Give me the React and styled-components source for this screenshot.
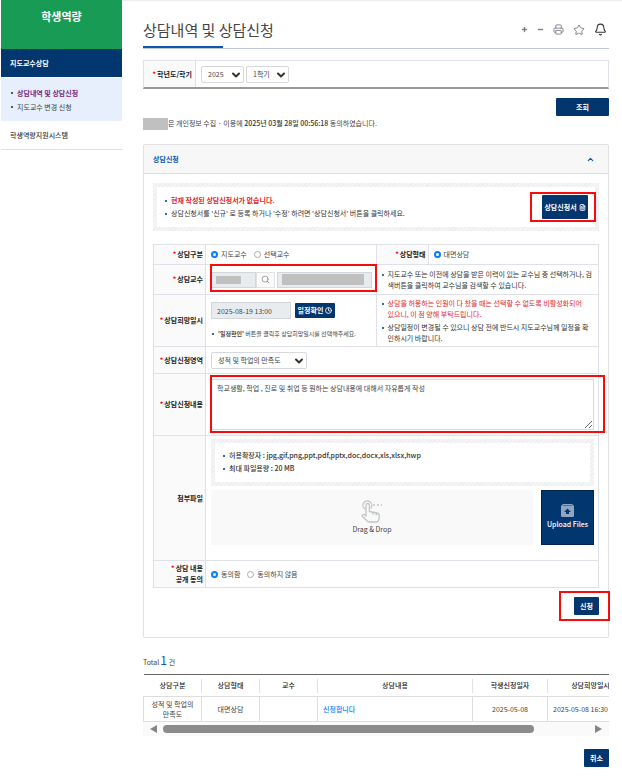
import React from "react";
import styled, { createGlobalStyle, css } from "styled-components";
import {
  Bell,
  ChevronDown,
  ChevronUp,
  Clock,
  FileText,
  Minus,
  Plus,
  Printer,
  Search,
  Star,
} from "lucide-react";

const color = {
  navy: "#02366f",
  green: "#189b54",
  blue: "#0a58b0",
  bright: "#0a7cff",
  red: "#e01f2d",
  line: "#dfe0e8",
  head: "#fafafb",
  text: "#444",
};

const GlobalStyle = createGlobalStyle`
  * {
    box-sizing: border-box;
  }

  body {
    margin: 0;
    background: #fff;
    color: ${color.text};
    font: 7px/11px "Noto Sans CJK KR", sans-serif;
  }

  button,
  input,
  select,
  textarea {
    margin: 0;
    color: inherit;
    font: inherit;
  }

  ul {
    margin: 0;
    padding: 0;
    list-style: none;
  }
`;

const Page = styled.div`
  display: flex;
  align-items: flex-start;
`;

const Sidebar = styled.nav`
  flex: none;
  width: 122px;
  padding-left: 1px;
`;

const Brand = styled.div`
  height: 49px;
  padding-top: 8px;
  background: ${color.green};
  color: #fff;
  font-size: 11px;
  font-weight: 700;
  line-height: 16px;
  text-align: center;
`;

const NavLink = styled.a`
  display: block;
  padding: 0 9px;
  line-height: 28px;
  color: #333;
  font-weight: 500;
  text-decoration: none;
  border-bottom: 1px solid #dcdfe8;

  ${(p) =>
    p.$active &&
    css`
      background: ${color.navy};
      border-color: #fff;
      color: #fff;
      font-weight: 700;
    `}
`;

const SubNav = styled.ul`
  padding: 8px 10px 7px;
  background: #e6effb;
`;

const SubLink = styled.a`
  display: flex;
  align-items: center;
  gap: 4px;
  line-height: 14px;
  white-space: nowrap;
  text-decoration: none;
  color: ${(p) => (p.$active ? "#7d2a7d" : "#444")};
  font-weight: ${(p) => (p.$active ? 700 : 400)};

  &::before {
    content: "";
    width: 2px;
    height: 2px;
    background: #555;
  }
`;

const Main = styled.main`
  flex: 1;
  min-width: 0;
  padding: 0 13px 14px 21px;
  border-top: 1px solid #eee;
`;

const TitleBar = styled.header`
  display: flex;
  align-items: center;
  justify-content: space-between;
  height: 48px;
  padding-top: 10px;
  background: linear-gradient(${color.blue}, ${color.blue}) left bottom / 80px
    2px no-repeat;
  border-bottom: 1px solid #bcc8d6;
`;

const Title = styled.h1`
  margin: 0;
  color: #444;
  font-size: 15px;
  font-weight: 400;
  line-height: 22px;
`;

const Tools = styled.div`
  display: flex;
  align-items: center;
  gap: 9px;
  padding-right: 2px;
`;

const ToolButton = styled.button`
  display: flex;
  padding: 0;
  border: 0;
  background: none;
  color: ${(p) => (p.$dark ? "#333" : "#7c838b")};
`;

const FilterBar = styled.div`
  display: flex;
  height: 29px;
  margin-top: 11px;
  border: 1px solid ${color.line};
  border-bottom: 2px solid #999;
`;

const FilterLabel = styled.label`
  display: flex;
  align-items: center;
  justify-content: flex-end;
  width: 52px;
  padding-right: 3px;
  background: ${color.head};
  border-right: 1px solid ${color.line};
  color: #222;
  font-weight: 700;
`;

const FilterFields = styled.div`
  display: flex;
  align-items: center;
  gap: 2px;
  padding-left: 5px;
`;

const SelectBox = styled.span`
  position: relative;
  display: inline-block;
  width: ${(p) => p.$width}px;
  vertical-align: top;

  svg {
    position: absolute;
    top: 3px;
    right: 2px;
    pointer-events: none;
  }
`;

const SelectField = styled.select`
  display: block;
  width: 100%;
  height: 17px;
  padding: 0 16px 0 6px;
  appearance: none;
  background: #fff;
  border: 1px solid #d5d8dc;
  border-radius: 2px;
`;

const Button = styled.button`
  display: inline-flex;
  align-items: center;
  justify-content: center;
  gap: 2px;
  width: ${(p) => p.$width}px;
  height: ${(p) => p.$height || 18}px;
  padding: 0;
  border: 0;
  border-radius: 1px;
  background: ${color.navy};
  color: #fff;
  font-weight: 700;
  white-space: nowrap;
`;

const ActionRow = styled.div`
  display: flex;
  justify-content: flex-end;
  margin-top: ${(p) => p.$top}px;
`;

const Consent = styled.p`
  display: flex;
  align-items: center;
  height: 13px;
  margin: 1px 0 14px;
  white-space: pre;

  time {
    color: #333;
    font-weight: 500;
  }
`;

const Redacted = styled.span`
  width: ${(p) => p.$width}px;
  height: ${(p) => p.$height}px;
  background: #c0c0c0;
`;

const Panel = styled.section`
  border: 1px solid #e0e2e6;
  border-radius: 2px;
`;

const PanelHead = styled.h2`
  display: flex;
  align-items: center;
  justify-content: space-between;
  height: 29px;
  margin: 0;
  padding: 0 13px 0 9px;
  background: #f7f7f7;
  border-bottom: 1px solid #dcdee2;
  color: ${color.blue};
  font-size: 7px;
  font-weight: 700;
`;

const PanelBody = styled.div`
  padding: 9px 9px 22px;
`;

const Striped = styled.div`
  padding: 4px;
  background: repeating-linear-gradient(
    135deg,
    #ebedee 0 1px,
    #f5f5f5 1px 3px
  );
`;

const StripedInner = styled.div`
  display: flex;
  align-items: center;
  justify-content: space-between;
  min-height: ${(p) => p.$height}px;
  padding: 0 7px 0 8px;
  background: #fff;
`;

const BulletList = styled.ul`
  color: #333;
  font-weight: ${(p) => (p.$bold ? 500 : 400)};
`;

const Bullet = styled.li`
  display: flex;
  gap: 4px;
  margin-bottom: 2px;
  color: ${(p) => (p.$alert ? color.red : "inherit")};
  font-weight: ${(p) => (p.$strong ? 700 : "inherit")};

  &:last-child {
    margin-bottom: 0;
  }

  &::before {
    content: "";
    flex: none;
    width: 2px;
    height: 2px;
    margin-top: 5px;
    background: #2873b8;
  }
`;

const Marked = styled.div`
  position: relative;

  &::after {
    content: "";
    position: absolute;
    inset: ${(p) => p.$inset};
    border: 2px solid #f80b0b;
    pointer-events: none;
  }
`;

const FormTable = styled.table`
  width: 100%;
  margin-top: 13px;
  table-layout: fixed;
  border-collapse: collapse;

  th,
  td {
    border: 1px solid ${color.line};
  }

  th {
    padding: 0 2px 0 0;
    background: ${color.head};
    color: #222;
    font-weight: 700;
    text-align: right;
  }

  td {
    padding: 0 4px 0 5px;
  }
`;

const FormRow = styled.tr`
  height: ${(p) => p.$height}px;
`;

const Required = styled.span`
  margin-right: 1px;
  color: #f00;
`;

const Inline = styled.div`
  display: flex;
  align-items: center;
  gap: ${(p) => p.$gap || 0}px;
`;

const RadioLabel = styled.label`
  display: inline-flex;
  align-items: center;
  gap: 3px;
  white-space: nowrap;
`;

const Radio = styled.input`
  width: 7px;
  height: 7px;
  appearance: none;
  background: #fff;
  border: 1px solid #aaa;
  border-radius: 50%;

  &:checked {
    border: 2px solid ${color.bright};
  }
`;

const MaskedField = styled.div`
  display: flex;
  align-items: center;
  flex: ${(p) => (p.$grow ? 1 : "none")};
  width: 45px;
  height: 16px;
  padding-left: 4px;
  background: #e9ecef;
  border: 1px solid #d3d6da;
`;

const SearchButton = styled.button`
  display: flex;
  align-items: center;
  justify-content: center;
  width: 19px;
  height: 16px;
  margin-right: 2px;
  padding: 0;
  background: #fafafa;
  border: 1px solid #e0e2e4;
  color: #888;
`;

const DateField = styled.input`
  width: 80px;
  height: 17px;
  padding: 0 5px;
  background: #e9ecef;
  border: 1px solid #d3d6da;
`;

const Hint = styled.div`
  margin: 9px 0 0 1px;
  font-size: 6px;
  white-space: nowrap;
`;

const Memo = styled.textarea`
  display: block;
  width: 100%;
  height: 51px;
  padding: 3px 5px;
  background: #fff;
  border: 1px solid #d8dade;
  outline: 0;
`;

const FileArea = styled.div`
  height: 55px;
  margin: 4px 0 13px;
  display: flex;
  gap: 8px;
`;

const DropZone = styled.div`
  display: flex;
  flex: 1;
  flex-direction: column;
  align-items: center;
  justify-content: center;
  background: #f9f9f9;
  color: #444;
`;

const UploadButton = styled.button`
  display: flex;
  flex-direction: column;
  align-items: center;
  justify-content: center;
  gap: 2px;
  width: 53px;
  padding: 0;
  background: ${color.navy};
  border: 1px solid #03244a;
  color: #fff;
  font-weight: 500;
`;

const Total = styled.p`
  margin: 14px 0 4px;
  line-height: 16px;

  strong {
    margin: 0 2px 0 1px;
    color: ${color.blue};
    font-size: 12px;
    font-weight: 400;
  }
`;

const Scroller = styled.div`
  overflow: hidden;
`;

const ResultTable = styled.table`
  width: 490px;
  min-width: 100%;
  table-layout: fixed;
  border-collapse: collapse;
  border-top: 1px solid #666;
  text-align: center;

  th {
    height: 22px;
    padding: 0;
    color: #222;
    font-weight: 500;
    background: linear-gradient(#e2e2e2, #e2e2e2) right center / 1px 14px
      no-repeat;
  }

  td {
    height: 25px;
    padding: 0 5px;
    border: 1px solid #ddd;
    line-height: 10px;
    word-break: keep-all;
  }

  td:last-child {
    text-align: left;
  }
`;

const SubjectCell = styled.td`
  text-align: left;

  a {
    color: ${color.bright};
    font-weight: 500;
    text-decoration: none;
  }
`;

const ScrollBar = styled.div`
  display: flex;
  align-items: center;
  gap: 6px;
  height: 14px;
  padding: 0 7px;
  background: #fafafa;
`;

const ScrollTrack = styled.div`
  flex: 1;
  height: 8px;
`;

const ScrollThumb = styled.div`
  width: 87%;
  height: 100%;
  border-radius: 4px;
  background: #8b8b8b;
`;

const ScrollArrow = styled.span`
  width: 7px;
  height: 8px;
  background: #858585;
  clip-path: ${(p) =>
    p.$left
      ? "polygon(100% 0, 0 50%, 100% 100%)"
      : "polygon(0 0, 100% 50%, 0 100%)"};
`;

const Select = ({ id, label, width, value }) => (
  <SelectBox $width={width}>
    <SelectField id={id} aria-label={label} defaultValue={value}>
      <option>{value}</option>
    </SelectField>
    <ChevronDown size={12} strokeWidth={4} color="#333" />
  </SelectBox>
);

const RadioOption = ({ name, checked, children }) => (
  <RadioLabel>
    <Radio type="radio" name={name} defaultChecked={checked} />
    {children}
  </RadioLabel>
);

const DragIcon = () => (
  <svg
    width="22"
    height="24"
    viewBox="0 0 22 24"
    fill="none"
    stroke="#c4c4c4"
    strokeWidth="1.3"
    strokeLinecap="round"
    strokeLinejoin="round"
    aria-hidden="true"
  >
    <path d="M3.6 8.8a4.4 4.4 0 1 1 6.4-1" />
    <path d="M5 16V5.2a1.7 1.7 0 0 1 3.4 0v6.3l7.5 1.5c1.6.3 2.4 1.2 2.4 2.6 0 2.8-.4 5.1-1.8 6.4H7.3L1.4 16.5c-.9-1 .8-2.7 2-1.9L5 16" />
    <path d="M12 12.3v2M15.2 13v2" />
    <path d="M12 5h9" strokeDasharray="2 2" strokeLinecap="butt" />
  </svg>
);

const UploadIcon = () => (
  <svg width="13" height="13" viewBox="0 0 13 13" aria-hidden="true">
    <path
      d="M2 0h9l2 2v9.5a1.5 1.5 0 0 1-1.5 1.5h-10A1.5 1.5 0 0 1 0 11.5V2z"
      fill="#8fa6c2"
    />
    <path d="M2 1.5h9" stroke="#4a6d98" />
    <path d="M6.5 4.5 10 8H8v2H5V8H3z" fill="#02366f" />
  </svg>
);

export default function App() {
  return (
    <>
      <GlobalStyle />
      <Page>
        <Sidebar>
          <Brand>학생역량</Brand>
          <NavLink href="#advisor" $active>
            지도교수상담
          </NavLink>
          <SubNav>
            <li>
              <SubLink href="#history" $active>
                상담내역 및 상담신청
              </SubLink>
            </li>
            <li>
              <SubLink href="#change">지도교수 변경 신청</SubLink>
            </li>
          </SubNav>
          <NavLink href="#system">학생역량지원시스템</NavLink>
        </Sidebar>

        <Main>
          <TitleBar>
            <Title>상담내역 및 상담신청</Title>
            <Tools>
              <ToolButton aria-label="확대">
                <Plus size={7} strokeWidth={5} />
              </ToolButton>
              <ToolButton aria-label="축소">
                <Minus size={7} strokeWidth={5} />
              </ToolButton>
              <ToolButton aria-label="인쇄">
                <Printer size={11} strokeWidth={2} />
              </ToolButton>
              <ToolButton aria-label="즐겨찾기">
                <Star size={12} strokeWidth={2} />
              </ToolButton>
              <ToolButton aria-label="알림" $dark>
                <Bell size={13} strokeWidth={2} />
              </ToolButton>
            </Tools>
          </TitleBar>

          <FilterBar>
            <FilterLabel htmlFor="year">
              <Required>*</Required>학년도/학기
            </FilterLabel>
            <FilterFields>
              <Select id="year" label="학년도" width={43} value="2025" />
              <Select id="term" label="학기" width={43} value="1학기" />
            </FilterFields>
          </FilterBar>
          <ActionRow $top={9}>
            <Button $width={53}>조회</Button>
          </ActionRow>

          <Consent>
            <Redacted $width={25} $height={12} />은 개인정보 수집 · 이용에{" "}
            <time>2025년 03월 28일 00:56:18</time> 동의하였습니다.
          </Consent>

          <Panel>
            <PanelHead>
              상담신청
              <ChevronUp size={9} strokeWidth={3} />
            </PanelHead>
            <PanelBody>
              <Striped>
                <StripedInner $height={40}>
                  <BulletList>
                    <Bullet $alert $strong>
                      현재 작성된 상담신청서가 없습니다.
                    </Bullet>
                    <Bullet>
                      상담신청서를 '신규' 로 등록 하거나 '수정' 하려면
                      '상담신청서' 버튼을 클릭하세요.
                    </Bullet>
                  </BulletList>
                  <Marked $inset="-3px -8px -3px -12px">
                    <Button $width={46} $height={24}>
                      상담신청서 <FileText size={7} strokeWidth={3} />
                    </Button>
                  </Marked>
                </StripedInner>
              </Striped>

              <FormTable>
                <colgroup>
                  <col width="52" />
                  <col />
                  <col width="52" />
                  <col />
                </colgroup>
                <tbody>
                  <FormRow $height={20}>
                    <th scope="row">
                      <Required>*</Required>상담구분
                    </th>
                    <td>
                      <Inline $gap={7}>
                        <RadioOption name="kind" checked>
                          지도교수
                        </RadioOption>
                        <RadioOption name="kind">선택교수</RadioOption>
                      </Inline>
                    </td>
                    <th scope="row">
                      <Required>*</Required>상담형태
                    </th>
                    <td>
                      <Inline>
                        <RadioOption name="form" checked>
                          대면상담
                        </RadioOption>
                      </Inline>
                    </td>
                  </FormRow>
                  <FormRow $height={30}>
                    <th scope="row">
                      <Required>*</Required>상담교수
                    </th>
                    <td>
                      <Marked $inset="-8px -5px -4px -1px">
                        <Inline>
                          <MaskedField>
                            <Redacted $width={25} $height={8} />
                          </MaskedField>
                          <SearchButton aria-label="교수 검색">
                            <Search size={9} />
                          </SearchButton>
                          <MaskedField $grow>
                            <Redacted $width={82} $height={11} />
                          </MaskedField>
                        </Inline>
                      </Marked>
                    </td>
                    <td colSpan="2">
                      <BulletList>
                        <Bullet>
                          지도교수 또는 이전에 상담을 받은 이력이 있는 교수님 중
                          선택하거나, 검색버튼을 클릭하여 교수님을 검색할 수
                          있습니다.
                        </Bullet>
                      </BulletList>
                    </td>
                  </FormRow>
                  <FormRow $height={52}>
                    <th scope="row">
                      <Required>*</Required>상담희망일시
                    </th>
                    <td>
                      <Inline $gap={4}>
                        <DateField
                          aria-label="상담희망일시"
                          defaultValue="2025-08-19 13:00"
                          readOnly
                        />
                        <Button $width={40} $height={15}>
                          일정확인 <Clock size={7} strokeWidth={3} />
                        </Button>
                      </Inline>
                      <Hint>
                        <Bullet as="div">
                          <span>
                            <b>'일정확인'</b> 버튼을 클릭후 상담희망일시를
                            선택해주세요.
                          </span>
                        </Bullet>
                      </Hint>
                    </td>
                    <td colSpan="2">
                      <BulletList>
                        <Bullet $alert>
                          <span>
                            상담을 허용하는 인원이 다 찼을 때는 선택할 수 없도록
                            비활성화되어
                            <br />
                            있으니, 이 점 양해 부탁드립니다.
                          </span>
                        </Bullet>
                        <Bullet>
                          상담일정이 변경될 수 있으니 상담 전에 반드시
                          지도교수님께 일정을 확인하시기 바랍니다.
                        </Bullet>
                      </BulletList>
                    </td>
                  </FormRow>
                  <FormRow $height={27}>
                    <th scope="row">
                      <Required>*</Required>상담신청영역
                    </th>
                    <td colSpan="3">
                      <Select
                        id="area"
                        label="상담신청영역"
                        width={96}
                        value="성적 및 학업의 만족도"
                      />
                    </td>
                  </FormRow>
                  <FormRow $height={62}>
                    <th scope="row">
                      <Required>*</Required>상담신청내용
                    </th>
                    <td colSpan="3">
                      <Marked $inset="-4px -11px -3px -1px">
                        <Memo
                          aria-label="상담신청내용"
                          defaultValue="학교생활, 학업 , 진로 및 취업 등 원하는 상담내용에 대해서 자유롭게 작성"
                        />
                      </Marked>
                    </td>
                  </FormRow>
                  <FormRow $height={125}>
                    <th scope="row">첨부파일</th>
                    <td colSpan="3">
                      <Striped>
                        <StripedInner $height={39}>
                          <BulletList $bold>
                            <Bullet>
                              허용확장자 :
                              jpg,gif,png,ppt,pdf,pptx,doc,docx,xls,xlsx,hwp
                            </Bullet>
                            <Bullet>최대 파일용량 : 20 MB</Bullet>
                          </BulletList>
                        </StripedInner>
                      </Striped>
                      <FileArea>
                        <DropZone>
                          <DragIcon />
                          Drag &amp; Drop
                        </DropZone>
                        <UploadButton>
                          <UploadIcon />
                          Upload Files
                        </UploadButton>
                      </FileArea>
                    </td>
                  </FormRow>
                  <FormRow $height={27}>
                    <th scope="row">
                      <Required>*</Required>상담 내용
                      <br />
                      공개 동의
                    </th>
                    <td colSpan="3">
                      <Inline $gap={7}>
                        <RadioOption name="agree" checked>
                          동의함
                        </RadioOption>
                        <RadioOption name="agree">동의하지 않음</RadioOption>
                      </Inline>
                    </td>
                  </FormRow>
                </tbody>
              </FormTable>

              <ActionRow $top={9}>
                <Marked $inset="-6px -11px -6px -15px">
                  <Button $width={25}>신청</Button>
                </Marked>
              </ActionRow>
            </PanelBody>
          </Panel>

          <Total>
            Total<strong>1</strong>건
          </Total>
          <Scroller>
            <ResultTable>
              <colgroup>
                <col width="58" />
                <col width="58" />
                <col width="58" />
                <col width="155" />
                <col width="75" />
                <col width="86" />
              </colgroup>
              <thead>
                <tr>
                  <th scope="col">상담구분</th>
                  <th scope="col">상담형태</th>
                  <th scope="col">교수</th>
                  <th scope="col">상담내용</th>
                  <th scope="col">학생신청일자</th>
                  <th scope="col">상담희망일시</th>
                </tr>
              </thead>
              <tbody>
                <tr>
                  <td>성적 및 학업의 만족도</td>
                  <td>대면상담</td>
                  <td />
                  <SubjectCell>
                    <a href="#detail">신청합니다</a>
                  </SubjectCell>
                  <td>2025-05-08</td>
                  <td>2025-05-08 16:30</td>
                </tr>
              </tbody>
            </ResultTable>
          </Scroller>
          <ScrollBar aria-hidden="true">
            <ScrollArrow $left />
            <ScrollTrack>
              <ScrollThumb />
            </ScrollTrack>
            <ScrollArrow />
          </ScrollBar>
          <ActionRow $top={13}>
            <Button $width={25}>취소</Button>
          </ActionRow>
        </Main>
      </Page>
    </>
  );
}
